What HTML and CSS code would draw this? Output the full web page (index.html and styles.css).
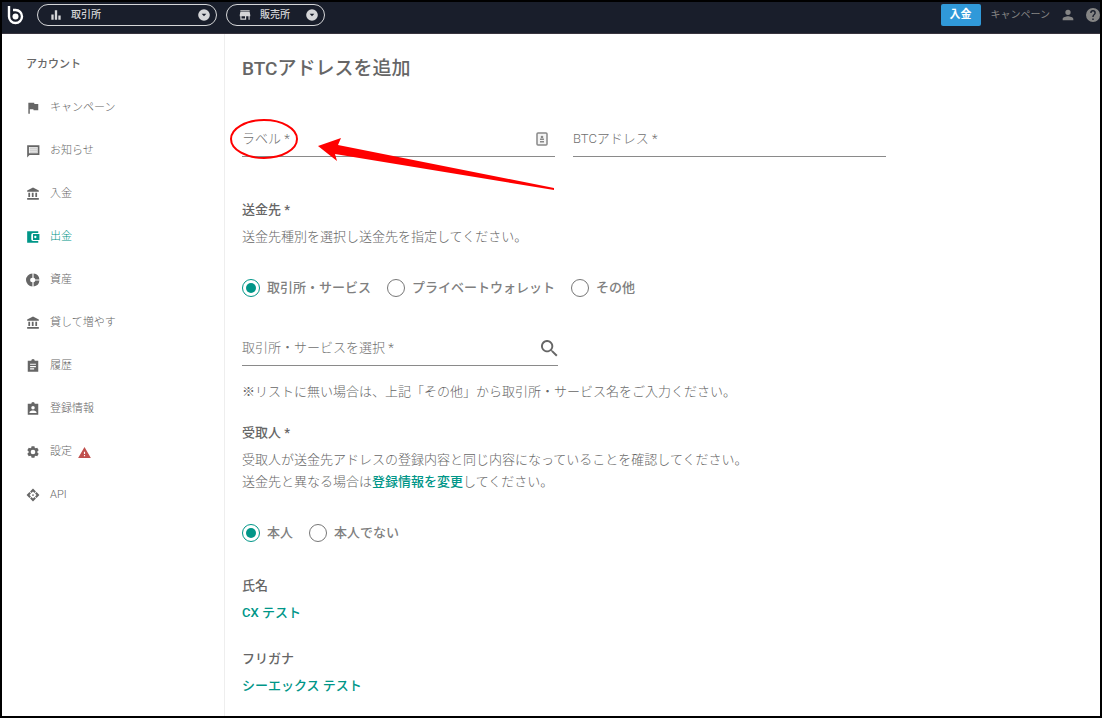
FILE: index.html
```html
<!DOCTYPE html>
<html lang="ja">
<head>
<meta charset="utf-8">
<meta name="viewport" content="width=device-width, initial-scale=1">
<title>BTCアドレスを追加</title>
<link rel="stylesheet" href="styles.css">
</head>
<body class="page">
<header class="topbar">
  <a class="logo" href="#" aria-label="ホーム">
    <svg class="logo-mark" viewBox="0 0 16 20"><path d="M1.500 1v10.500a6.500 6.500 0 1 0 6.500-6.500H5.500" fill="none" stroke="#fff" stroke-width="2.400"/><circle cx="8" cy="11.500" r="3" fill="#fff"/></svg>
  </a>
  <button class="pill pill-wide" type="button">
    <svg class="icon" viewBox="0 0 24 24"><path d="M4 11h4v9H4zM10 4h4v16h-4zM16 13h4v7h-4z"/></svg>
    <span class="pill-text">取引所</span>
    <svg class="caret" viewBox="0 0 24 24"><path d="M12 2a10 10 0 1 0 0 20 10 10 0 0 0 0-20zm0 12-4-4h8z"/></svg>
  </button>
  <button class="pill" type="button">
    <svg class="icon" viewBox="0 0 24 24"><path d="M20 4H4v2h16V4zm1 10v-2l-1-5H4l-1 5v2h1v6h10v-6h4v6h2v-6h1zm-9 4H6v-4h6v4z"/></svg>
    <span class="pill-text">販売所</span>
    <svg class="caret" viewBox="0 0 24 24"><path d="M12 2a10 10 0 1 0 0 20 10 10 0 0 0 0-20zm0 12-4-4h8z"/></svg>
  </button>
  <div class="top-actions">
    <button class="deposit" type="button">入金</button>
    <a class="top-link" href="#">キャンペーン</a>
    <a class="top-icon" href="#" aria-label="アカウント"><svg class="icon-user" viewBox="0 0 24 24"><path d="M12 12a4 4 0 1 0 0-8 4 4 0 0 0 0 8zm0 2c-2.670 0-8 1.340-8 4v2h16v-2c0-2.660-5.330-4-8-4z"/></svg></a>
    <a class="top-icon" href="#" aria-label="ヘルプ"><svg class="icon-help" viewBox="2 2 20 20"><path d="M12 2a10 10 0 1 0 0 20 10 10 0 0 0 0-20zm1 17h-2v-2h2v2zm2.070-7.750-.9.920C13.450 12.900 13 13.500 13 15h-2v-.5c0-1.100.45-2.100 1.170-2.830l1.240-1.260c.37-.36.59-.86.59-1.410a2 2 0 0 0-4 0H8a4 4 0 0 1 8 0c0 .88-.36 1.680-.93 2.250z"/></svg></a>
  </div>
</header>
<div class="layout">
  <nav class="sidebar" aria-labelledby="nav-title">
    <h2 class="nav-title" id="nav-title">アカウント</h2>
    <ul class="nav-list">
      <li><a class="nav-link" href="#"><svg class="icon" viewBox="0 0 24 24"><path d="M14.400 5 14 3H4v19h2.500v-8h6.100l.4 2h8V5z"/></svg>キャンペーン</a></li>
      <li><a class="nav-link" href="#"><svg class="icon" viewBox="0 0 24 24"><path fill-rule="evenodd" d="M23 2H2v21l4-4h17V2zM5 5h15v11H5V5z"/><path d="M6 6h13v2H6zM6 9.500h13v2H6zM6 13h13v2H6z" opacity=".4"/></svg>お知らせ</a></li>
      <li><a class="nav-link" href="#"><svg class="icon" viewBox="0 0 24 24"><path d="M4 10v7h3v-7H4zm6 0v7h3v-7h-3zM2 22h20v-3H2v3zm14-12v7h3v-7h-3zM12 1 2 6v2h20V6L12 1z"/></svg>入金</a></li>
      <li><a class="nav-link nav-current" href="#" aria-current="page"><svg class="icon" viewBox="0 0 24 24"><path fill-rule="evenodd" d="M21 19v3H2V2h19v3h-9a3 3 0 0 0-3 3v8a3 3 0 0 0 3 3h9zm-9-2h11V7H12v10zm4-3a2 2 0 1 1 0-4 2 2 0 0 1 0 4z"/></svg>出金</a></li>
      <li><a class="nav-link" href="#"><svg class="icon" viewBox="0 0 24 24"><path d="M11 16a4 4 0 0 1 0-8V1a11 11 0 0 0 0 22v-7zM13 1v7a4 4 0 0 1 3 3h7A11 11 0 0 0 13 1zm3 12a4 4 0 0 1-3 3v7a11 11 0 0 0 10-10h-7z"/></svg>資産</a></li>
      <li><a class="nav-link" href="#"><svg class="icon" viewBox="0 0 24 24"><path d="M4 10v7h3v-7H4zm6 0v7h3v-7h-3zM2 22h20v-3H2v3zm14-12v7h3v-7h-3zM12 1 2 6v2h20V6L12 1z"/></svg>貸して増やす</a></li>
      <li><a class="nav-link" href="#"><svg class="icon" viewBox="0 0 24 24"><path fill-rule="evenodd" d="M21 3h-6a3 3 0 0 0-6 0H3v19h18V3zm-7 15H7v-2h7v2zm3-4H7v-2h10v2zm0-4H7V8h10v2z"/></svg>履歴</a></li>
      <li><a class="nav-link" href="#"><svg class="icon" viewBox="0 0 24 24"><path fill-rule="evenodd" d="M21 3h-6a3 3 0 0 0-6 0H3v19h18V3zm-9 4a3 3 0 1 1 0 6 3 3 0 0 1 0-6zm6 12H6v-1.400c0-2 4-3.100 6-3.100s6 1.100 6 3.100V19z"/></svg>登録情報</a></li>
      <li><a class="nav-link" href="#"><svg class="icon" viewBox="0 0 24 24"><path fill-rule="evenodd" d="m9.500 2-.5 2.700-1.700 1-2.600-1L2.200 9l2.200 1.800v2.400L2.200 15l2.500 4.300 2.600-1 1.700 1 .5 2.700h5l.5-2.700 1.700-1 2.600 1 2.500-4.300-2.200-1.800v-2.400L21.800 9l-2.500-4.300-2.600 1-1.700-1-.5-2.700h-5zM12 8a4 4 0 1 1 0 8 4 4 0 0 1 0-8z"/></svg>設定<svg class="icon-warning" viewBox="1 2 22 19"><path fill-rule="evenodd" d="M1 21h22L12 2 1 21zm12-3h-2v-2h2v2zm0-4h-2v-4h2v4z"/></svg></a></li>
      <li><a class="nav-link" href="#"><svg class="icon" viewBox="0 0 24 24"><path d="m12 1 5 5-2.500 2.500L12 6 9.500 8.500 7 6zM12 23l-5-5 2.500-2.500L12 18l2.500-2.500L17 18zM1 12l5-5 2.500 2.500L6 12l2.500 2.500L6 17zM23 12l-5 5-2.500-2.500L18 12l-2.500-2.500L18 7z"/><circle cx="12" cy="12" r="1.500"/></svg>API</a></li>
    </ul>
  </nav>
  <main class="content">
    <h1 class="title">BTCアドレスを追加</h1>
    <form class="form">
      <div class="field-row">
        <div class="field">
          <label class="field-label" for="label">ラベル *</label>
          <input class="field-input" id="label" type="text">
          <svg class="icon-contact" viewBox="0 0 12 14"><rect x="1" y="1" width="10" height="12" rx="1" fill="#f4f4f4" stroke="#888" stroke-width="1.500"/><circle cx="6" cy="5" r="1.300"/><path d="M4 6.500h4V8H4zM4 9h4v1.500H4z"/></svg>
        </div>
        <div class="field">
          <label class="field-label" for="address">BTCアドレス *</label>
          <input class="field-input" id="address" type="text">
        </div>
      </div>
      <fieldset class="group group-destination">
        <legend class="group-title">送金先 *</legend>
        <p class="text">送金先種別を選択し送金先を指定してください。</p>
        <div class="radios">
          <label class="choice"><input class="radio" type="radio" name="destination" checked>取引所・サービス</label>
          <label class="choice"><input class="radio" type="radio" name="destination">プライベートウォレット</label>
          <label class="choice"><input class="radio" type="radio" name="destination">その他</label>
        </div>
      </fieldset>
      <div class="field field-search">
        <label class="field-label" for="service">取引所・サービスを選択 *</label>
        <input class="field-input" id="service" type="text">
        <svg class="icon-search" viewBox="3 3 18 18"><path d="M15.500 14h-.79l-.28-.27A6.500 6.500 0 1 0 13.730 14.430l.27.28v.79l5 4.990L20.490 19l-4.990-5zm-6 0a4.500 4.500 0 1 1 0-9 4.500 4.500 0 0 1 0 9z"/></svg>
      </div>
      <p class="text note">※リストに無い場合は、上記「その他」から取引所・サービス名をご入力ください。</p>
      <fieldset class="group group-recipient">
        <legend class="group-title">受取人 *</legend>
        <p class="text">受取人が送金先アドレスの登録内容と同じ内容になっていることを確認してください。<br>送金先と異なる場合は<a class="text-link" href="#">登録情報を変更</a>してください。</p>
        <div class="radios">
          <label class="choice"><input class="radio" type="radio" name="recipient" checked>本人</label>
          <label class="choice"><input class="radio" type="radio" name="recipient">本人でない</label>
        </div>
      </fieldset>
      <dl class="details">
        <div class="detail"><dt class="detail-name">氏名</dt><dd class="detail-value">CX テスト</dd></div>
        <div class="detail"><dt class="detail-name">フリガナ</dt><dd class="detail-value">シーエックス テスト</dd></div>
      </dl>
    </form>
  </main>
</div>
<svg class="annotation" viewBox="0 0 330 74" aria-hidden="true"><ellipse cx="38" cy="24" rx="33" ry="19" fill="none" stroke="#f00" stroke-width="2"/><path fill="#f00" d="m92 31 23-8-3 7 216 43v2L109 39l2 7z"/></svg>
</body>
</html>
```
FILE: styles.css
```css
* { box-sizing: border-box; }

.page {
  position: relative;
  display: flex;
  flex-direction: column;
  min-height: 100vh;
  margin: 0;
  border: 2px solid #000;
  background: #fff;
  color: #666;
  font: 13px/22px Roboto, "Noto Sans CJK JP", sans-serif;
}

svg { display: block; flex: none; fill: currentColor; }
a { color: inherit; text-decoration: none; }
button { font: inherit; cursor: pointer; }

.icon { width: 14px; height: 14px; }

.topbar {
  display: flex;
  align-items: center;
  height: 32px;
  padding: 0 0 6px 5px;
  border-bottom: 1px solid #38343e;
  background: #191e2b;
}
.logo { margin-right: 13px; }
.logo-mark { width: 17px; height: 20px; }
.pill {
  display: flex;
  align-items: center;
  gap: 8px;
  height: 22px;
  margin-right: 9px;
  padding: 0 5px 0 11px;
  border: 1px solid #d5d6d8;
  border-radius: 11px;
  background: none;
  color: #d5d6d8;
  font-size: 10px;
  font-weight: 500;
}
.pill-wide { width: 180px; }
.pill-text { margin-right: 7px; }
.caret { width: 14px; height: 14px; margin-left: auto; }
.top-actions {
  display: flex;
  align-items: center;
  gap: 10px;
  margin-left: auto;
  color: #858585;
}
.deposit {
  width: 40px;
  height: 22px;
  padding: 0;
  border: 0;
  border-radius: 2px;
  background: #3099d9;
  color: #fff;
  font-size: 11px;
  font-weight: 700;
}
.top-link { font-size: 10px; }
.icon-user { width: 16px; height: 16px; }
.icon-help { width: 14px; height: 14px; }

.layout { display: flex; flex: 1; }

.sidebar {
  flex: none;
  width: 223px;
  padding: 20px 24px;
  border-right: 1px solid #eee;
  font-size: 11px;
}
.nav-title { margin: 0 0 21px; font-size: 11px; font-weight: 500; line-height: 22px; }
.nav-list {
  display: grid;
  gap: 21px;
  margin: 0;
  padding: 0;
  list-style: none;
}
.nav-link { display: flex; align-items: center; color: #666; font-weight: 300; }
.nav-link .icon { margin-right: 10px; }
.nav-current { color: #009688; }
.icon-warning { width: 13px; height: 11px; margin-left: 6px; color: #c0504d; }

.content { flex: 1; min-width: 0; padding: 23px 17px 18px; }
.title { margin: 0 0 41px; font-size: 19px; font-weight: 500; line-height: 24px; }
.form { max-width: 644px; }

.field-row { display: grid; grid-template-columns: 1fr 1fr; gap: 18px; }
.field {
  display: flex;
  align-items: center;
  height: 35px;
  border-bottom: 1px solid #8a8a8a;
}
.field-label { color: #707070; font-weight: 300; }
.field-input {
  flex: 1;
  min-width: 0;
  padding: 0 4px;
  border: 0;
  outline: 0;
  background: none;
  font: inherit;
}
.icon-contact { width: 12px; height: 14px; margin-right: 7px; color: #888; }
.icon-search { width: 17px; height: 17px; }
.field-search { width: 49%; margin-top: 32px; }

.group { min-width: 0; margin: 0; padding: 0; border: 0; }
.group-destination { margin-top: 42px; }
.group-recipient { margin-top: 19px; }
.group-title { padding: 0; margin-bottom: 5px; font-weight: 500; }
.text { margin: 0; color: #666; font-weight: 300; }
.note { margin-top: 15px; }
.text-link { color: #009688; font-weight: 500; }

.radios { display: flex; flex-wrap: wrap; gap: 16px; margin-top: 29px; }
.choice { display: flex; align-items: center; gap: 7px; color: #808080; font-weight: 500; }
.radio {
  appearance: none;
  display: grid;
  place-items: center;
  width: 18px;
  height: 18px;
  margin: 0;
  border: 1px solid #777;
  border-radius: 50%;
}
.radio:checked { border-color: #009688; }
.radio:checked::before {
  content: "";
  width: 10px;
  height: 10px;
  border-radius: 50%;
  background: #009688;
}

.details { display: grid; gap: 24px; margin: 31px 0 0; font-weight: 500; }
.detail-name { margin-bottom: 5px; }
.detail-value { margin: 0; color: #009688; }

.annotation {
  position: absolute;
  top: 112px;
  left: 224px;
  width: 330px;
  height: 76px;
  overflow: visible;
  pointer-events: none;
}
```
